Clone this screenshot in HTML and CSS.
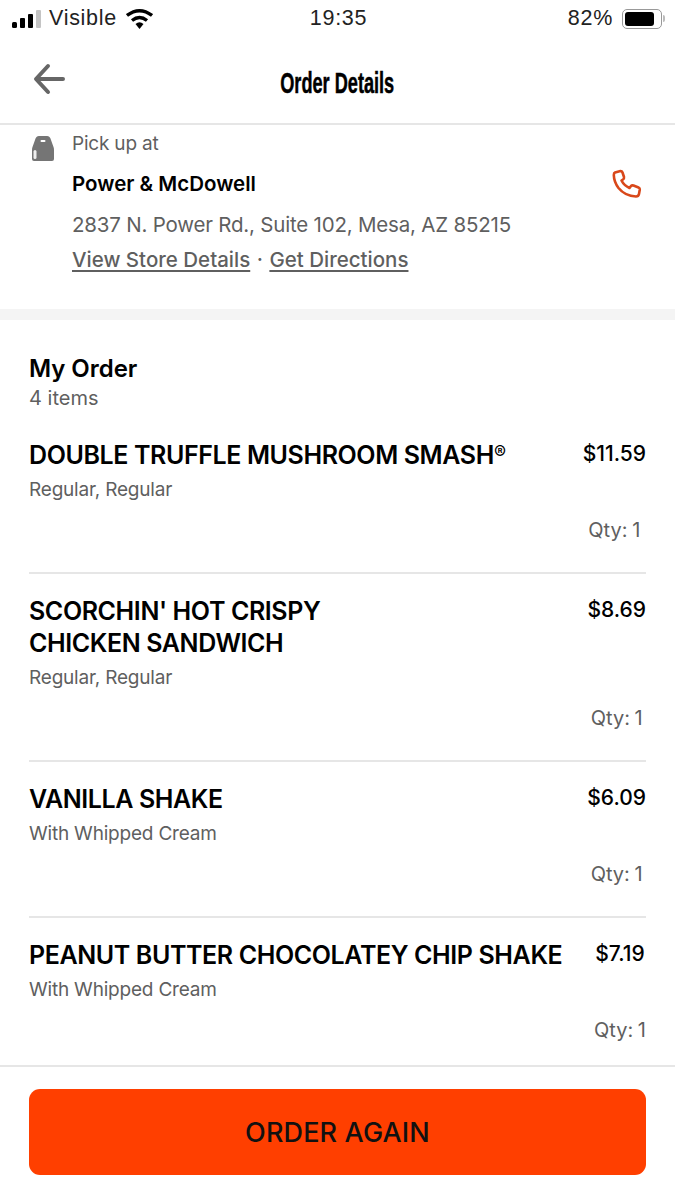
FILE: index.html
```html
<!DOCTYPE html>
<html lang="en">
<head>
    <meta charset="UTF-8">
    <meta name="viewport" content="width=device-width, initial-scale=1.0">
    <title>Order Details</title>
    <link rel="stylesheet" href="styles.css">
</head>
<body>

<div class="statusbar">
    <div class="status-left">
        <svg class="signal" width="29" height="18" viewBox="0 0 29 18">
            <rect x="0" y="12" width="5" height="6" rx="1.500" fill="#000"/>
            <rect x="8" y="8" width="5" height="10" rx="1" fill="#000"/>
            <rect x="16" y="4" width="5" height="14" rx="1" fill="#000"/>
            <rect x="24" y="0" width="5" height="18" rx="1" fill="#c4c4c4"/>
        </svg>
        <span>Visible</span>
        <svg class="wifi" width="27" height="20" viewBox="0 0 27 20">
            <path d="M1 6.500 Q13.500 -3 26 6.500" fill="none" stroke="#000" stroke-width="3.400"/>
            <path d="M6 11.500 Q13.500 5.500 21 11.500" fill="none" stroke="#000" stroke-width="3.400"/>
            <path d="M9.500 15 Q13.500 11.500 17.500 15 L13.500 20 Z" fill="#000"/>
        </svg>
    </div>
    <div class="status-time">19:35</div>
    <div class="status-right">
        <span>82%</span>
        <span class="battery"><span class="battery-fill"></span></span>
        <span class="battery-cap"></span>
    </div>
</div>

<div class="navbar">
    <svg class="back" width="34" height="32" viewBox="0 0 34 32">
        <path d="M31 16 H5 M16 3 L4 16 L16 29" fill="none" stroke="#666" stroke-width="4" stroke-linecap="round" stroke-linejoin="round"/>
    </svg>
    <h1>Order Details</h1>
</div>

<div class="content">
    <div class="pickup">
        <svg class="bag" width="24" height="28" viewBox="0 0 24 28">
            <path d="M8 1 H16 Q19 1 20 5 L22.500 12 Q23 13 23 15 V24 Q23 26 21 26 H3 Q1 26 1 24 V15 Q1 13 1.500 12 L4 5 Q5 1 8 1 Z" fill="#757575"/>
            <rect x="9.500" y="5" width="5" height="2" rx="1" fill="#fff"/>
            <rect x="2.500" y="15" width="3" height="9" rx="1.500" fill="#eee"/>
        </svg>
        <div class="pickup-info">
            <div class="pickup-label">Pick up at</div>
            <div class="store-name">Power &amp; McDowell</div>
            <div class="store-address">2837 N. Power Rd., Suite 102, Mesa, AZ 85215</div>
            <div class="store-links">
                <a href="#">View Store Details</a>
                <span class="dot">·</span>
                <a href="#">Get Directions</a>
            </div>
        </div>
        <svg class="phone" width="30" height="30" viewBox="0 0 30 30">
            <path d="M3 3.500 L8.500 2 Q10 2 10.500 3.500 L12 8 Q12.300 9.500 11 10.500 L9.500 11.500 Q12 16.500 17.500 19 L19 17 Q20 16 21.500 16.500 L26.500 18.500 Q28 19.200 27.800 20.500 L27 25 Q26.500 27.500 24 27.500 Q13 27 6.500 19 Q2 13 1.800 6 Q1.800 4 3 3.500 Z" fill="none" stroke="#d9481a" stroke-width="2.600" stroke-linejoin="round"/>
        </svg>
    </div>

    <div class="band"></div>

    <div class="order">
        <h2>My Order</h2>
        <div class="order-count">4 items</div>

        <div class="item">
            <div class="item-main">
                <div class="item-name">DOUBLE TRUFFLE MUSHROOM SMASH<sup>®</sup></div>
                <div class="item-sub">Regular, Regular</div>
            </div>
            <div class="item-side">
                <div class="item-price">$11.59</div>
                <div class="item-qty">Qty: 1</div>
            </div>
        </div>

        <div class="item">
            <div class="item-main">
                <div class="item-name">SCORCHIN' HOT CRISPY<br>CHICKEN SANDWICH</div>
                <div class="item-sub">Regular, Regular</div>
            </div>
            <div class="item-side">
                <div class="item-price">$8.69</div>
                <div class="item-qty">Qty: 1</div>
            </div>
        </div>

        <div class="item">
            <div class="item-main">
                <div class="item-name">VANILLA SHAKE</div>
                <div class="item-sub">With Whipped Cream</div>
            </div>
            <div class="item-side">
                <div class="item-price">$6.09</div>
                <div class="item-qty">Qty: 1</div>
            </div>
        </div>

        <div class="item">
            <div class="item-main">
                <div class="item-name">PEANUT BUTTER CHOCOLATEY CHIP SHAKE</div>
                <div class="item-sub">With Whipped Cream</div>
            </div>
            <div class="item-side">
                <div class="item-price">$7.19</div>
                <div class="item-qty">Qty: 1</div>
            </div>
        </div>
    </div>
</div>

<div class="footer">
    <button class="order-again">ORDER AGAIN</button>
</div>

</body>
</html>
```

FILE: styles.css
```css
* {
    box-sizing: border-box;
}

html, body {
    margin: 0;
    padding: 0;
}

body {
    width: 675px;
    height: 1200px;
    display: flex;
    flex-direction: column;
    overflow: hidden;
    background-color: #fff;
    color: #000;
    font-family: Inter, "Liberation Sans", sans-serif;
}

/* status bar */
.statusbar {
    height: 37px;
    padding: 0 10px 0 12px;
    display: grid;
    grid-template-columns: 1fr auto 1fr;
    align-items: center;
    font-family: "Liberation Sans", Arial, sans-serif;
    font-size: 21.500px;
    letter-spacing: 0.700px;
    color: #222;
}

.status-left {
    display: flex;
    align-items: center;
}

.signal {
    margin-right: 8px;
}

.wifi {
    margin-left: 9px;
}

.status-right {
    display: flex;
    align-items: center;
    justify-content: flex-end;
}

.battery {
    width: 40px;
    height: 20px;
    margin-left: 9px;
    padding: 2px;
    border: 1.500px solid #999;
    border-radius: 5px;
}

.battery-fill {
    display: block;
    width: 85%;
    height: 100%;
    background-color: #000;
    border-radius: 3px;
}

.battery-cap {
    width: 2px;
    height: 7px;
    margin-left: 1px;
    background-color: #bbb;
    border-radius: 0 2px 2px 0;
}

/* nav */
.navbar {
    height: 88px;
    position: relative;
    display: flex;
    align-items: center;
    justify-content: center;
    border-bottom: 2px solid #e6e6e6;
}

.back {
    position: absolute;
    left: 32px;
    top: 26px;
}

.navbar h1 {
    margin: 5px 0 0;
    font-family: "Liberation Sans", Arial, sans-serif;
    font-size: 30px;
    font-weight: 700;
    line-height: 32px;
    transform: scaleX(0.605);
    white-space: nowrap;
    -webkit-text-stroke: 0.500px #000;
}

.content {
    flex: 1;
    overflow: hidden;
}

/* pickup */
.pickup {
    height: 184px;
    padding: 7px 33px 0 31px;
    display: flex;
    align-items: flex-start;
}

.bag {
    flex: none;
    margin-top: 3px;
}

.pickup-info {
    flex: 1;
    margin-left: 17px;
    color: #5f5f5f;
    font-size: 20.500px;
}

.pickup-label {
    font-size: 19px;
    line-height: 24px;
    letter-spacing: -0.200px;
}

.store-name {
    margin-top: 16px;
    font-size: 20.500px;
    font-weight: 600;
    line-height: 24px;
    color: #000;
}

.store-address {
    margin-top: 16px;
    line-height: 26px;
    letter-spacing: -0.200px;
}

.store-links {
    margin-top: 9px;
    line-height: 26px;
    font-weight: 500;
}

.store-links a {
    color: #5f5f5f;
    text-decoration: underline;
    text-decoration-thickness: 2px;
    text-underline-offset: 3px;
}

.dot {
    margin: 0 1px;
}

.phone {
    flex: none;
    margin-top: 37px;
}

.band {
    height: 11px;
    background-color: #f4f4f4;
}

/* order */
.order {
    padding: 33px 29px 0;
}

.order h2 {
    margin: 0;
    font-size: 24px;
    font-weight: 600;
    line-height: 32px;
    letter-spacing: -0.050px;
}

.order-count {
    margin-bottom: 7px;
    font-size: 20px;
    line-height: 26px;
    color: #5f5f5f;
}

.item {
    padding: 21px 0 30px;
    display: flex;
    justify-content: space-between;
    border-bottom: 2px solid #e6e6e6;
}

.item:last-child {
    border-bottom: none;
}

.item-main {
    padding-bottom: 40px;
}

.item-name {
    font-size: 25px;
    font-weight: 600;
    line-height: 32px;
    letter-spacing: -0.400px;
}

.item-name sup {
    font-size: 18px;
    font-weight: 500;
    line-height: 0;
    vertical-align: 5px;
}

.item-side {
    display: flex;
    flex-direction: column;
    align-items: center;
    justify-content: space-between;
}

.item-price {
    font-size: 21px;
    font-weight: 500;
    line-height: 30px;
}

.item-sub {
    margin-top: 7px;
    font-size: 19px;
    line-height: 24px;
    letter-spacing: -0.200px;
    color: #5f5f5f;
}

.item-qty {
    font-size: 20px;
    line-height: 24px;
    word-spacing: -1px;
    color: #5f5f5f;
}

/* footer */
.footer {
    height: 135px;
    padding: 22px 29px 0;
    border-top: 2px solid #e6e6e6;
}

.order-again {
    width: 100%;
    height: 86px;
    border: none;
    border-radius: 11px;
    background-color: #ff3f00;
    color: #111;
    font-family: Inter, "Liberation Sans", sans-serif;
    font-size: 27px;
    font-weight: 500;
    letter-spacing: 0.150px;
}
```
